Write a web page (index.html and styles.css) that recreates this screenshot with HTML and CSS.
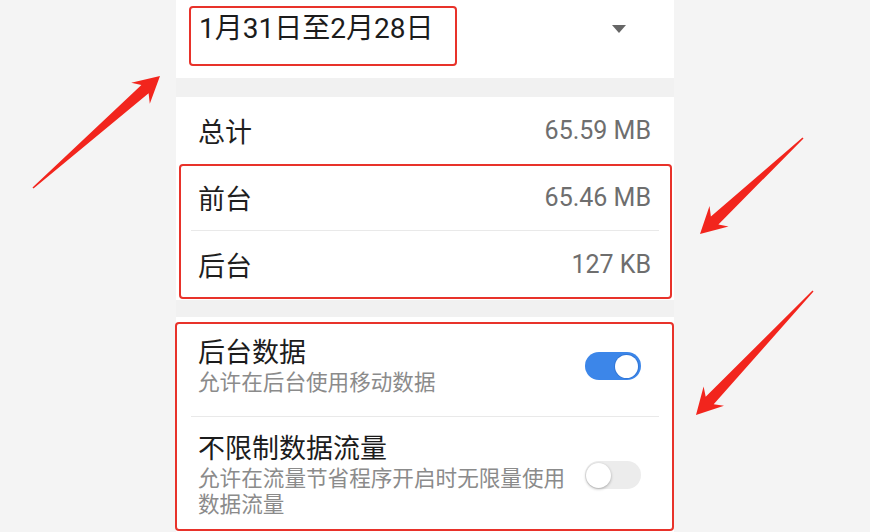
FILE: index.html
```html
<!DOCTYPE html>
<html lang="zh-CN">
<head>
<meta charset="utf-8">
<title>流量使用情况</title>
<link rel="stylesheet" href="styles.css">
</head>
<body>
<div class="phone">
  <section class="sec date-sec">
    <span class="date">1月31日至2月28日</span>
    <span class="caret"></span>
  </section>
  <div class="gap gap-a"></div>
  <section class="sec stats">
    <div class="stat"><span class="label">总计</span><span class="value">65.59 MB</span></div>
    <div class="stat"><span class="label">前台</span><span class="value">65.46 MB</span></div>
    <div class="divider"></div>
    <div class="stat"><span class="label">后台</span><span class="value">127 KB</span></div>
  </section>
  <div class="gap gap-b"></div>
  <section class="sec toggles">
    <div class="trow trow-1">
      <div class="ttext">
        <div class="ttitle">后台数据</div>
        <div class="tsub">允许在后台使用移动数据</div>
      </div>
      <span class="switch on"><span class="knob"></span></span>
    </div>
    <div class="divider"></div>
    <div class="trow trow-2">
      <div class="ttext">
        <div class="ttitle">不限制数据流量</div>
        <div class="tsub">允许在流量节省程序开启时无限量使用数据流量</div>
      </div>
      <span class="switch off"><span class="knob"></span></span>
    </div>
  </section>
</div>

<div class="marks">
  <div class="box box-1"></div>
  <div class="box box-2"></div>
  <div class="box box-3"></div>
  <svg class="arrows" width="870" height="532" viewBox="0 0 870 532">
    <polygon points="33.5,188.6 148.6,93.3 149.8,103.7 160,76 131.2,82.7 141.4,85.1 32.5,187.4"/>
    <polygon points="803.5,138.5 718.4,224.4 728.5,226.5 700,234 709.5,206.1 710.9,216.4 802.5,137.5"/>
    <polygon points="813.5,291.5 713.7,404.3 724,405.7 696,415 703.6,386.5 705.7,396.7 812.5,290.5"/>
  </svg>
</div>
</body>
</html>
```

FILE: styles.css
```css
html, body {
  margin: 0;
  padding: 0;
}
body {
  position: relative;
  width: 870px;
  height: 532px;
  overflow: hidden;
  background: #f4f4f4;
  font-family: Roboto, "Noto Sans CJK SC", sans-serif;
  color: #1f1f1f;
}
.phone {
  margin-left: 176px;
  width: 498px;
}
.sec {
  background: #ffffff;
}
.gap {
  background: #f1f1f1;
}
.gap-a { height: 19px; }
.gap-b { height: 17px; }

.date-sec {
  height: 78px;
  box-sizing: border-box;
  padding: 9px 48px 0 23px;
  display: flex;
  align-items: flex-start;
  justify-content: space-between;
}
.date {
  font-size: 28px;
  line-height: 40px;
  color: #1c1c1c;
}
.caret {
  margin-top: 16px;
  width: 0;
  height: 0;
  border-left: 7px solid transparent;
  border-right: 7px solid transparent;
  border-top: 8px solid #666666;
}

.stats {
  height: 203px;
}
.stat {
  height: 67px;
  padding: 0 23px 0 22px;
  display: flex;
  align-items: center;
  justify-content: space-between;
}
.label {
  font-size: 27px;
  color: #1f1f1f;
}
.value {
  font-size: 25px;
  color: #6e6e6e;
}
.divider {
  height: 1px;
  background: #e9e9e9;
  margin: 0 15px;
}
.stats .divider {
  margin-top: -1px;
}

.toggles {
  height: 215px;
}
.trow {
  display: flex;
  align-items: center;
  padding: 0 33px 0 22px;
}
.trow-1 { padding-top: 19px; padding-bottom: 20px; }
.trow-2 { padding-top: 15px; padding-bottom: 14px; }
.ttext {
  flex: 1;
  min-width: 0;
}
.ttitle {
  font-size: 27px;
  line-height: 34px;
  color: #1c1c1c;
}
.tsub {
  font-size: 21.6px;
  line-height: 26px;
  color: #8b8b8b;
}
.switch {
  flex: none;
  margin-left: 16px;
  width: 56px;
  height: 28px;
  border-radius: 14px;
  display: flex;
  align-items: center;
  box-sizing: border-box;
  padding: 0 3px;
}
.switch.on {
  background: #3c86e9;
  justify-content: flex-end;
}
.switch.off {
  background: #ececec;
  justify-content: flex-start;
  padding: 0 1px;
}
.knob {
  width: 23px;
  height: 23px;
  border-radius: 50%;
  background: #ffffff;
}
.switch.on .knob {
  box-shadow: 0 0 0 1px rgba(30, 90, 180, 0.35);
}
.switch.off .knob {
  width: 25px;
  height: 25px;
  box-shadow: 0 1px 3px rgba(0, 0, 0, 0.3);
}

.marks {
  position: absolute;
  left: 0;
  top: 0;
  width: 870px;
  height: 532px;
  pointer-events: none;
}
.box {
  position: absolute;
  box-sizing: border-box;
  border: 2.5px solid #e8322a;
  border-radius: 4px;
}
.box-1 { left: 189px; top: 6px; width: 268px; height: 60px; }
.box-2 { left: 179px; top: 164px; width: 493px; height: 135px; }
.box-3 { left: 175px; top: 322px; width: 499px; height: 209px; }
.arrows {
  position: absolute;
  left: 0;
  top: 0;
}
.arrows polygon {
  fill: #f2251d;
}
```
